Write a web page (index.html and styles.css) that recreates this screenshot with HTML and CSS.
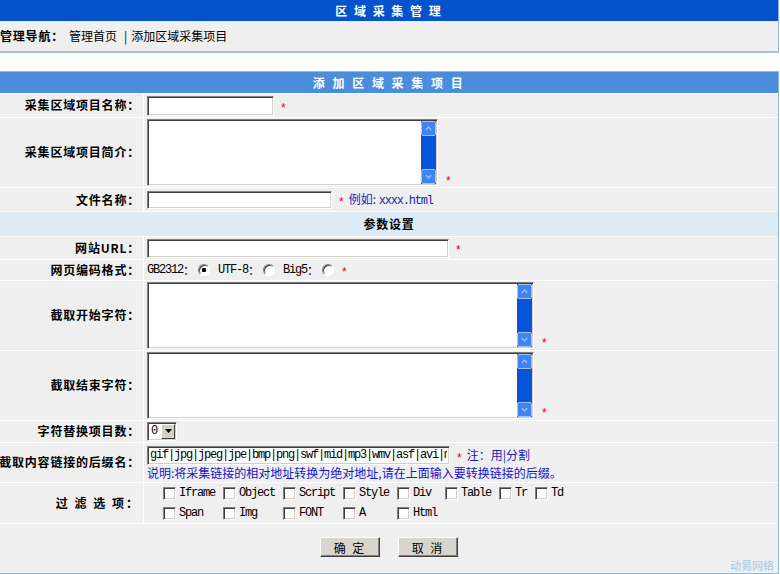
FILE: index.html
```html
<!DOCTYPE html>
<html lang="zh-CN">
<head>
<meta charset="utf-8">
<title>区域采集管理</title>
<link rel="stylesheet" href="styles.css">
</head>
<body>
<div class="panel top">
  <div class="bar">区 域 采 集 管 理</div>
  <div class="nav"><b>管理导航：</b><a class="link">管理首页</a><span class="sep">|</span><a class="link">添加区域采集项目</a></div>
</div>

<form class="panel form">
  <div class="bar light">添 加 区 域 采 集 项 目</div>

  <div class="row">
    <div class="lbl">采集区域项目名称：</div>
    <div class="val pad-name"><input type="text" class="field w-name"><span class="req">*</span></div>
  </div>

  <div class="row">
    <div class="lbl">采集区域项目简介：</div>
    <div class="val pad-memo">
      <div class="memo w-intro">
        <textarea></textarea>
        <div class="sbar"><span class="sb-btn"><svg viewBox="0 0 8 5"><path d="M1 4L4 1l3 3"/></svg></span><span class="sb-track"></span><span class="sb-btn"><svg viewBox="0 0 8 5"><path d="M1 1l3 3 3-3"/></svg></span></div>
      </div>
      <span class="req low">*</span>
    </div>
  </div>

  <div class="row">
    <div class="lbl">文件名称：</div>
    <div class="val pad-file"><input type="text" class="field w-file"><span class="req">*</span><span class="hint">例如: <span class="mono">xxxx.html</span></span></div>
  </div>

  <div class="section">参数设置</div>

  <div class="row">
    <div class="lbl">网站URL：</div>
    <div class="val pad-url"><input type="text" class="field w-url"><span class="req">*</span></div>
  </div>

  <div class="row">
    <div class="lbl">网页编码格式：</div>
    <div class="val pad-enc">
      <span class="mono">GB2312</span>：<input type="radio" name="enc" class="radio" checked>
      <span class="mono">UTF-8</span>：<input type="radio" name="enc" class="radio">
      <span class="mono">Big5</span>：<input type="radio" name="enc" class="radio">
      <span class="req">*</span>
    </div>
  </div>

  <div class="row">
    <div class="lbl">截取开始字符：</div>
    <div class="val pad-memo">
      <div class="memo w-code">
        <textarea></textarea>
        <div class="sbar"><span class="sb-btn"><svg viewBox="0 0 8 5"><path d="M1 4L4 1l3 3"/></svg></span><span class="sb-track"></span><span class="sb-btn"><svg viewBox="0 0 8 5"><path d="M1 1l3 3 3-3"/></svg></span></div>
      </div>
      <span class="req low">*</span>
    </div>
  </div>

  <div class="row">
    <div class="lbl">截取结束字符：</div>
    <div class="val pad-memo">
      <div class="memo w-code">
        <textarea></textarea>
        <div class="sbar"><span class="sb-btn"><svg viewBox="0 0 8 5"><path d="M1 4L4 1l3 3"/></svg></span><span class="sb-track"></span><span class="sb-btn"><svg viewBox="0 0 8 5"><path d="M1 1l3 3 3-3"/></svg></span></div>
      </div>
      <span class="req low">*</span>
    </div>
  </div>

  <div class="row">
    <div class="lbl">字符替换项目数：</div>
    <div class="val pad-url">
      <span class="select"><span class="sel-text">0</span><span class="sel-btn"><svg viewBox="0 0 7 4"><path d="M0 0h7L3.5 4z"/></svg></span></span>
    </div>
  </div>

  <div class="row">
    <div class="lbl">截取内容链接的后缀名：</div>
    <div class="val pad-ext">
      <div class="ext-line"><input type="text" class="field w-ext mono" value="gif|jpg|jpeg|jpe|bmp|png|swf|mid|mp3|wmv|asf|avi|mpg|rm|ra|rmvb"><span class="req">*</span><span class="hint">注：用|分割</span></div>
      <div class="note">说明:将采集链接的相对地址转换为绝对地址,请在上面输入要转换链接的后缀。</div>
    </div>
  </div>

  <div class="row">
    <div class="lbl spaced">过 滤 选 项：</div>
    <div class="val pad-opts">
      <div class="opts">
        <label class="opt"><input type="checkbox" class="check"><span class="mono">Iframe</span></label>
        <label class="opt"><input type="checkbox" class="check"><span class="mono">Object</span></label>
        <label class="opt"><input type="checkbox" class="check"><span class="mono">Script</span></label>
        <label class="opt"><input type="checkbox" class="check"><span class="mono">Style</span></label>
        <label class="opt"><input type="checkbox" class="check"><span class="mono">Div</span></label>
        <label class="opt"><input type="checkbox" class="check"><span class="mono">Table</span></label>
        <label class="opt"><input type="checkbox" class="check"><span class="mono">Tr</span></label>
        <label class="opt"><input type="checkbox" class="check"><span class="mono">Td</span></label>
        <label class="opt"><input type="checkbox" class="check"><span class="mono">Span</span></label>
        <label class="opt"><input type="checkbox" class="check"><span class="mono">Img</span></label>
        <label class="opt"><input type="checkbox" class="check"><span class="mono">FONT</span></label>
        <label class="opt"><input type="checkbox" class="check"><span class="mono">A</span></label>
        <label class="opt"><input type="checkbox" class="check"><span class="mono">Html</span></label>
      </div>
    </div>
  </div>

  <div class="actions">
    <button type="submit" class="btn">确 定</button>
    <button type="reset" class="btn">取 消</button>
  </div>

  <span class="brand">动易网络</span>
</form>
</body>
</html>
```

FILE: styles.css
```css
* {
  box-sizing: border-box;
}

body {
  margin: 0;
  background: #fff;
  color: #000;
  font: 12px/1.2 "Noto Sans CJK SC", "Liberation Sans", sans-serif;
}

/* outer frames */
.panel {
  width: 779px;
  border-right: 1px solid #8dbad9;
}

.top {
  border-bottom: 2px solid #a2c6df;
}

.bar {
  height: 21px;
  line-height: 21px;
  text-align: center;
  color: #fff;
  font-weight: bold;
  letter-spacing: 2px;
  background: #0452cc;
}

.bar.light {
  background: #4a8edb;
  letter-spacing: 2.5px;
}

.nav {
  height: 30px;
  display: flex;
  align-items: center;
  background: #efefef;
}

.nav b {
  margin-right: 5px;
  letter-spacing: 0.8px;
}

.nav .sep {
  margin: 0 4px 0 7px;
  color: #000;
}

.link {
  color: #000;
  text-decoration: none;
}

.form {
  position: relative;
  margin-top: 18px;
  border-top: 1px solid #8dbad9;
  border-bottom: 1px solid #8dbad9;
  display: flex;
  flex-direction: column;
  gap: 1px;
  background: #fff;
}

/* form rows */
.row {
  display: flex;
  gap: 1px;
}

.lbl {
  width: 143px;
  flex: none;
  display: flex;
  align-items: center;
  justify-content: flex-end;
  padding-right: 3px;
  font-weight: bold;
  letter-spacing: 0.8px;
  white-space: nowrap;
  background: #efefef;
}

.lbl.spaced {
  letter-spacing: 2px;
}

.val {
  flex: 1;
  display: flex;
  align-items: center;
  padding: 1px 3px;
  background: #efefef;
  white-space: nowrap;
}

.pad-name { padding-top: 2px; padding-bottom: 1px; }
.pad-memo { padding-top: 1px; padding-bottom: 1px; }
.pad-file { padding-top: 2px; padding-bottom: 2px; }
.pad-url { padding-top: 1px; padding-bottom: 1px; }
.pad-enc { min-height: 20px; padding-top: 0; padding-bottom: 0; }
.pad-ext {
  flex-direction: column;
  align-items: flex-start;
  padding-top: 3px;
  padding-bottom: 2px;
}
.pad-opts { padding-top: 0; padding-bottom: 0; }

.section {
  height: 24px;
  line-height: 24px;
  text-align: center;
  font-weight: bold;
  letter-spacing: 0.8px;
  background: #dcebf6;
}

/* classic sunken fields */
.field,
.memo,
.select {
  border: 1px solid;
  border-color: #808080 #fff #fff #808080;
  box-shadow: inset 1px 1px #404040, inset -1px -1px #d4d0c8;
  background: #fff;
}

.field {
  height: 19px;
  padding: 0 2px;
  font: 12px "Noto Sans CJK SC", sans-serif;
  outline: none;
}

.w-name { width: 127px; height: 20px; }
.w-file { width: 185px; height: 18px; }
.w-url { width: 302px; }
.w-ext { width: 303px; }

.req {
  color: #e1002a;
  margin-left: 7px;
  padding-top: 5px;
  font-family: "Liberation Sans", sans-serif;
}

.req.low {
  align-self: flex-end;
  padding-top: 0;
  margin-left: 8px;
  margin-bottom: -2px;
}

.hint {
  color: #1c1cb4;
  margin-left: 5px;
}

.mono {
  font-family: "Liberation Mono", monospace;
  font-size: 12px;
  letter-spacing: -1.2px;
}

.w-ext.mono {
  padding: 0 2px;
  color: #000;
}

/* multi-line boxes with a blue scroll bar */
.memo {
  display: flex;
  height: 67px;
  padding: 1px;
}

.w-intro { width: 291px; }
.w-code { width: 387px; }

.memo textarea {
  flex: 1;
  border: 0;
  padding: 0;
  resize: none;
  outline: none;
  background: #fff;
}

.sbar {
  width: 15px;
  display: flex;
  flex-direction: column;
  background: #0754d9;
}

.sb-btn {
  height: 15px;
  flex: none;
  display: flex;
  align-items: center;
  justify-content: center;
  background: #3f85f1;
  border: 1px solid #9ec2f7;
  border-radius: 2px;
}

.sb-btn svg {
  width: 7px;
  height: 5px;
  fill: none;
  stroke: #a8c8f8;
  stroke-width: 1.4;
}

.sb-track {
  flex: 1;
}

/* encoding radios */
.radio {
  appearance: none;
  width: 12px;
  height: 12px;
  margin: 0 8px 0 3px;
  border-radius: 50%;
  border: 1px solid;
  border-color: #808080 #fff #fff #808080;
  box-shadow: inset 1px 1px #404040;
  background: #fff;
}

.radio:checked {
  background: radial-gradient(circle, #000 0 2px, #fff 2.5px);
}

.pad-enc .req {
  margin-left: 0;
}

/* drop-down */
.select {
  display: inline-flex;
  width: 30px;
  height: 19px;
  padding: 1px;
}

.sel-text {
  flex: 1;
  padding-left: 2px;
  line-height: 15px;
  font-family: "Liberation Mono", monospace;
  font-size: 12px;
}

.sel-btn {
  width: 14px;
  display: flex;
  align-items: center;
  justify-content: center;
  background: #d4d0c8;
  border: 1px solid;
  border-color: #fff #404040 #404040 #fff;
}

.sel-btn svg {
  width: 7px;
  height: 4px;
  fill: #000;
}

/* suffix row */
.ext-line {
  display: flex;
  align-items: center;
}

.note {
  color: #1414c8;
  margin-top: 1px;
  line-height: 14px;
}

/* filter options */
.opts {
  display: grid;
  grid-template-columns: repeat(8, auto);
  grid-auto-rows: 20px;
  justify-content: start;
  column-gap: 8px;
  margin-left: 16px;
}

.opt {
  display: inline-flex;
  align-items: center;
}

.check {
  appearance: none;
  width: 13px;
  height: 13px;
  margin: 0 3px 0 0;
  border: 1px solid;
  border-color: #808080 #fff #fff #808080;
  box-shadow: inset 1px 1px #404040, inset -1px -1px #d4d0c8;
  background: #fff;
}

/* buttons */
.actions {
  height: 49px;
  display: flex;
  align-items: flex-start;
  justify-content: center;
  gap: 18px;
  padding-top: 13px;
  background: #efefef;
}

.btn {
  width: 60px;
  height: 20px;
  padding: 0;
  font: 12px "Noto Sans CJK SC", sans-serif;
  letter-spacing: 2px;
  color: #000;
  background: #d8d5ce;
  border: 1px solid;
  border-color: #fff #404040 #404040 #fff;
  box-shadow: inset -1px -1px #808080;
}

.brand {
  position: absolute;
  right: 4px;
  bottom: 1px;
  font-size: 11px;
  color: #a8c8e6;
}
```
